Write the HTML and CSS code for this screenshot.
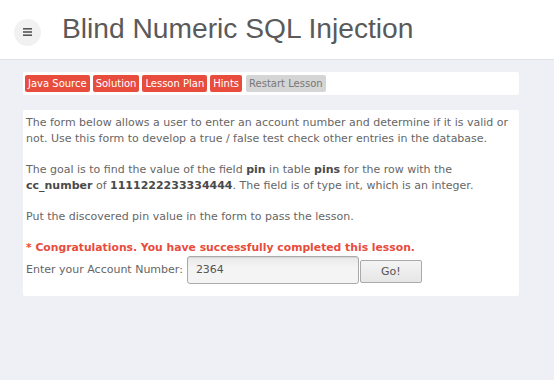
FILE: index.html
```html
<!DOCTYPE html>
<html>
<head>
<meta charset="utf-8">
<link rel="stylesheet" href="styles.css">
</head>
<body>
<header class="topbar">
  <div class="menu-btn">
    <svg width="9" height="8" viewBox="0 0 9 8"><rect x="0" y="0" width="9" height="1.6" fill="#555"/><rect x="0" y="3.2" width="9" height="1.6" fill="#555"/><rect x="0" y="6.4" width="9" height="1.6" fill="#555"/></svg>
  </div>
  <h1 class="title">Blind Numeric SQL Injection</h1>
</header>
<main class="main">
  <div class="toolbar">
    <span class="btn red">Java Source</span>
    <span class="btn red">Solution</span>
    <span class="btn red">Lesson Plan</span>
    <span class="btn red">Hints</span>
    <span class="btn gray">Restart Lesson</span>
  </div>
  <div class="content">
    <p>The form below allows a user to enter an account number and determine if it is valid or not. Use this form to develop a true / false test check other entries in the database.</p>
    <p>The goal is to find the value of the field <b>pin</b> in table <b>pins</b> for the row with the <b>cc_number</b> of <b>1111222233334444</b>. The field is of type int, which is an integer.</p>
    <p>Put the discovered pin value in the form to pass the lesson.</p>
    <div class="success">* Congratulations. You have successfully completed this lesson.</div>
    <div class="form-row">
      <span class="label">Enter your Account Number:</span>
      <span class="input">2364</span>
      <span class="go">Go!</span>
    </div>
  </div>
</main>
</body>
</html>
```
FILE: styles.css
```css
body {
  margin: 0;
  background: #eff0f5;
  font-family: "DejaVu Sans", sans-serif;
  color: #555;
}
.topbar {
  height: 60px;
  background: #fff;
  border-bottom: 1px solid #e1e2e8;
  display: flex;
  align-items: center;
  padding-left: 14px;
  box-sizing: border-box;
}
.menu-btn {
  width: 27px;
  height: 27px;
  border-radius: 50%;
  background: #f1f1f1;
  display: flex;
  align-items: center;
  justify-content: center;
  margin-right: 21px;
  margin-top: 5px;
}
.title {
  margin: 0 0 2px 0;
  font-family: "Liberation Sans", Arial, sans-serif;
  font-weight: normal;
  font-size: 28.2px;
  color: #5a5a5a;
}
.main {
  padding: 12px 35px 0 23px;
}
.toolbar {
  background: #fff;
  height: 23px;
  display: flex;
  align-items: center;
  gap: 3px;
  padding: 0 2px;
  border-radius: 2px;
}
.btn {
  font-size: 10px;
  height: 17px;
  line-height: 17px;
  padding: 0 3px;
  border-radius: 2px;
}
.red {
  background: #e74c3c;
  color: #fff;
}
.gray {
  background: #d5d5d5;
  color: #777;
  margin-left: 1px;
}
.content {
  background: #fff;
  margin-top: 15px;
  padding: 5px 3px 12px 3px;
  font-size: 11px;
  line-height: 16px;
  color: #666;
  border-radius: 2px;
}
.content p {
  margin: 0 0 15px 0;
}
.content b {
  color: #4a4a4a;
}
.success {
  color: #e74c3c;
  font-weight: bold;
  font-size: 10.8px;
}
.form-row {
  display: flex;
  align-items: center;
  height: 28px;
}
.label {
  margin-right: 4px;
}
.input {
  width: 162px;
  height: 26px;
  line-height: 26px;
  padding-left: 8px;
  border: 1px solid #aaa;
  border-radius: 3px;
  background: linear-gradient(#e8e8e8, #f4f4f4 40%, #f4f4f4);
  box-shadow: inset 0 1px 1px rgba(0,0,0,0.08);
  color: #555;
}
.go {
  width: 60px;
  height: 21px;
  line-height: 21px;
  text-align: center;
  border: 1px solid #aaa;
  border-radius: 2px;
  background: linear-gradient(#f4f4f4, #e6e6e6);
  color: #555;
  margin-left: 1px;
  margin-top: 2px;
}
```
